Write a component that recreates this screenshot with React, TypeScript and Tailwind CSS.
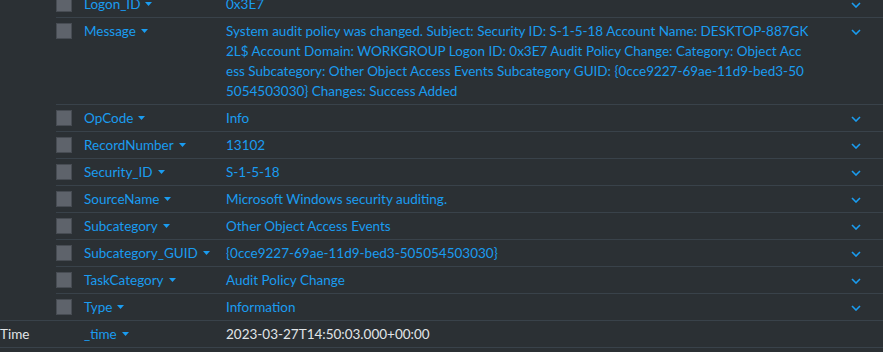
const messageLines = [
  'System audit policy was changed. Subject: Security ID: S-1-5-18 Account Name: DESKTOP-887GK',
  '2L$ Account Domain: WORKGROUP Logon ID: 0x3E7 Audit Policy Change: Category: Object Acc',
  'ess Subcategory: Other Object Access Events Subcategory GUID: {0cce9227-69ae-11d9-bed3-50',
  '5054503030} Changes: Success Added',
];

const fields = [
  { name: 'Logon_ID', lines: ['0x3E7'] },
  { name: 'Message', lines: messageLines },
  { name: 'OpCode', lines: ['Info'] },
  { name: 'RecordNumber', lines: ['13102'] },
  { name: 'Security_ID', lines: ['S-1-5-18'] },
  { name: 'SourceName', lines: ['Microsoft Windows security auditing.'] },
  { name: 'Subcategory', lines: ['Other Object Access Events'] },
  { name: 'Subcategory_GUID', lines: ['{0cce9227-69ae-11d9-bed3-505054503030}'] },
  { name: 'TaskCategory', lines: ['Audit Policy Change'] },
  { name: 'Type', lines: ['Information'] },
];

const Caret = () => (
  <svg width="7" height="4" viewBox="0 0 7 4" className="ml-[5px] shrink-0">
    <path d="M0 0h7L3.5 4z" fill="#1a9cf0" />
  </svg>
);

const Chevron = () => (
  <svg width="10" height="6" viewBox="0 0 10 6" className="mt-[8px]">
    <path d="M1 1l4 4 4-4" fill="none" stroke="#1a9cf0" strokeWidth="1.6" />
  </svg>
);

export default function App() {
  return (
    <div
      className="w-[883px] h-[352px] overflow-hidden bg-[#2b3034] text-[13.5px] leading-5"
      style={{ fontFamily: 'Lato, sans-serif' }}
    >
      <div className="-mt-[9px]">
        {fields.map(({ name, lines }, i) => (
          <div key={name} className="flex pl-[56px]">
            <div
              className={
                i === fields.length - 1
                  ? 'flex flex-1 pt-[3px] pb-[3px]'
                  : 'flex flex-1 border-b border-[#39424a] pt-[3px] pb-[3px]'
              }
            >
              <div className="w-[28px] shrink-0 pt-[2px]">
                <div className="w-4 h-4 bg-[#5e636b] border border-[#474c53]" />
              </div>
              <div className="w-[142px] shrink-0 flex items-center h-5 text-[#1a9cf0]">
                {name}
                <Caret />
              </div>
              <div className="w-[620px] shrink-0 text-[#1a9cf0] whitespace-nowrap">
                {lines.map((l) => (
                  <div key={l}>{l}</div>
                ))}
              </div>
              <div className="pl-[5px]">
                <Chevron />
              </div>
            </div>
          </div>
        ))}
        <div className="flex border-t border-b border-[#39424a] py-[3px]">
          <div className="w-[84px] shrink-0 text-[#e1e5e8]">Time</div>
          <div className="w-[142px] shrink-0 flex items-center h-5 text-[#1a9cf0]">
            _time
            <Caret />
          </div>
          <div className="text-[#e1e5e8]">2023-03-27T14:50:03.000+00:00</div>
        </div>
      </div>
    </div>
  );
}
